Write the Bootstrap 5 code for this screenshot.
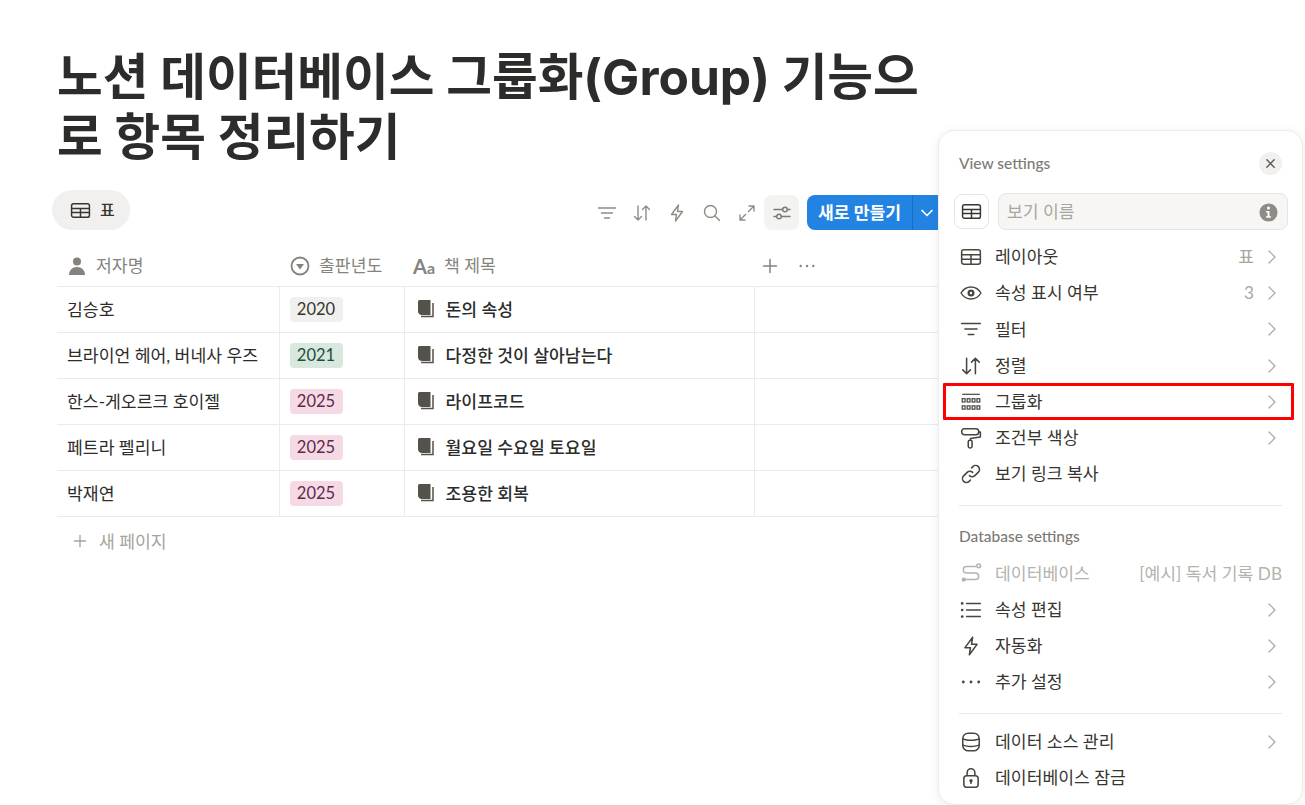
<!DOCTYPE html>
<html lang="ko">
<head>
<meta charset="UTF-8">
<meta name="viewport" content="width=device-width, initial-scale=1.0">
<title>노션 데이터베이스 그룹화</title>
<link rel="stylesheet" href="https://cdn.jsdelivr.net/npm/bootstrap@5.3.0/dist/css/bootstrap.min.css">
<style>
html, body { height: 100%; overflow: hidden; background: #fff; }
body { font-family: Lato, "Noto Sans CJK KR", sans-serif; color: #2c2c2b; position: relative; }
svg { display: block; flex: none; }
.page-main { width: 939px; height: 805px; padding: 45px 0 0 52px; overflow: hidden; }
.page-title { font-family: Inter, "Noto Sans CJK KR", sans-serif; font-size: 49.7px; line-height: 60px; font-weight: 700; margin: 2px 0 23px 5px; width: 868px; color: #2c2c2b; }
.view-bar { height: 40px; }
.tab-pill { flex: none; width: 78px; height: 40px; border-radius: 20px; background: #f1f0ee; font-size: 16px; font-weight: 500; gap: 9px; padding-left: 18px; color: #37352f; }
.tool-icons { padding-top: 5px; margin-right: -1px; }
.tool-btn { width: 35px; height: 35px; color: #8f8c86; }
.tool-btn.active { background: #f3f3f2; border-radius: 8px; color: #7d7a75; }
.new-btn { margin-left: 8px; width: 133px; height: 35px; border-radius: 8px 0 0 8px; background: #2383e2; color: #fff; font-size: 17.2px; font-weight: 700; flex: none; }
.new-btn .new-label { width: 106px; text-align: center; border-right: 1px solid #1a6cbd; line-height: 35px; }
.new-btn .new-arrow { width: 27px; }
.db-table { margin: 15px 0 0 5px; width: 881px; table-layout: fixed; border-collapse: collapse; }
.db-table th, .db-table td { padding: 0; border-bottom: 1px solid #ebebe9; }
.db-table th { height: 41px; padding-top: 1px; font-size: 17.2px; font-weight: 400; color: #86837e; }
.db-table td { height: 46px; font-size: 17.2px; border-right: 1px solid #ebebe9; color: #2c2c2b; }
.db-table td:last-child { border-right: 0; }
.head-cell { gap: 9px; padding-left: 11px; }
.head-first { padding-left: 10px; }
.head-title { padding-left: 9px; }
.head-tools { padding-left: 8px; }
.aa-mark { width: 22px; font-size: 20px; font-weight: 700; line-height: 1; }
.aa-mark small { font-size: 16px; }
.db-table td.name-cell { padding: 2px 0 0 10px; }
.year-tag { display: inline-block; margin-left: 10px; width: 53px; height: 25px; line-height: 25px; border-radius: 4px; text-align: center; font-size: 16.5px; }
.tag-gray { background: #f1f0ee; color: #37352f; }
.tag-green { background: #d9e8df; color: #1f4d3a; }
.tag-pink { background: #f5dae6; color: #5c2a48; }
.book-title { gap: 11px; padding: 2px 0 0 12px; font-weight: 500; font-size: 17.2px; color: #2c2c2b; }
.add-row { margin: 12px 0 0 21px; gap: 12px; font-size: 17.2px; color: #a6a39e; }
.settings-panel { position: absolute; left: 938px; top: 130px; width: 365px; height: 675px; background: #fff; border: 1px solid #ececea; border-radius: 16px; box-shadow: 0 2px 12px rgba(0, 0, 0, .07); }
.panel-head { padding: 21px 20px 0 20px; height: 44px; font-size: 15.5px; color: #7d7a75; font-weight: 500; }
.close-dot { width: 23px; height: 23px; border-radius: 50%; background: #f1f0ee; color: #5a5853; }
.name-row { padding: 19px 14px 0 15px; gap: 9px; }
.icon-box { width: 35px; height: 35px; border: 1px solid #e6e5e2; border-radius: 8px; color: #37352f; }
.name-field { width: 290px; height: 37px; margin-top: -1px; background: #f7f6f4; border: 1px solid #e6e5e2; border-radius: 8px; padding: 1px 9px 0 8px; font-size: 17.2px; color: #a8a6a1; }
.menu-list { margin-top: 9px; }
.menu-row { height: 36.2px; padding: 0 25px 0 22px; font-size: 17.2px; color: #37352f; }
.menu-row .row-icon { width: 24px; margin-right: 10px; color: #48463f; }
.menu-row .row-icon svg { width: 22px; height: 22px; margin-left: -1px; }
.menu-row .row-value { margin-left: auto; color: #a8a6a1; margin-right: 13px; }
.menu-row .row-chevron { color: #a8a6a1; }
.menu-row.dim { color: #b5b3ae; padding-right: 20px; }
.menu-row.dim .row-icon { color: #b5b3ae; }
.menu-row.dim .row-value { margin-right: 0; color: #b5b3ae; }
.row-push { margin-left: auto; }
.row-marked { position: relative; z-index: 1; }
.row-marked::after { content: ""; position: absolute; left: 4px; right: 8px; top: -1px; bottom: 0; border: 3px solid #f00; border-radius: 1px; }
.panel-rule { height: 1px; background: #e9e8e6; margin: 13px 20px 0 20px; }
.section-label { font-size: 15.5px; font-weight: 500; color: #7d7a75; padding: 19px 20px 0 20px; height: 49px; }
.rule-tail { margin-bottom: 10px; }
</style>
</head>
<body>
<svg width="0" height="0" class="position-absolute">
  <defs>
    <symbol id="i-table" viewBox="0 0 20 20"><g fill="none" stroke="currentColor" stroke-width="1.400"><rect x="1.500" y="3.500" width="17" height="13" rx="2"/><path d="M1.500 8h17M1.500 12h17M10 8v8.500"/></g></symbol>
    <symbol id="i-filter" viewBox="0 0 20 20"><path d="M1.500 5h17M4.500 10h11M7.500 15h5" fill="none" stroke="currentColor" stroke-width="1.400" stroke-linecap="round"/></symbol>
    <symbol id="i-sort" viewBox="0 0 20 20"><path d="M6 3v14M2.500 13.500 6 17l3.500-3.500M14 17V3M10.500 6.500 14 3l3.500 3.500" fill="none" stroke="currentColor" stroke-width="1.400" stroke-linecap="round" stroke-linejoin="round"/></symbol>
    <symbol id="i-bolt" viewBox="0 0 20 20"><path d="M11.500 2 4.500 11.500h5L8.500 18l7-9.500h-5z" fill="none" stroke="currentColor" stroke-width="1.400" stroke-linejoin="round"/></symbol>
    <symbol id="i-search" viewBox="0 0 20 20"><g fill="none" stroke="currentColor" stroke-width="1.400" stroke-linecap="round"><circle cx="8.500" cy="8.500" r="6"/><path d="m13 13 4.500 4.500"/></g></symbol>
    <symbol id="i-expand" viewBox="0 0 20 20"><path d="M11.500 8.500 17 3M12 3h5v5M8.500 11.500 3 17M3 12v5h5" fill="none" stroke="currentColor" stroke-width="1.400" stroke-linecap="round" stroke-linejoin="round"/></symbol>
    <symbol id="i-sliders" viewBox="0 0 20 20"><g fill="none" stroke="currentColor" stroke-width="1.400" stroke-linecap="round"><path d="M2 6.500h8.500M15.500 6.500H18M2 13.500h2.500M9.500 13.500H18"/><circle cx="13" cy="6.500" r="2.300"/><circle cx="7" cy="13.500" r="2.300"/></g></symbol>
    <symbol id="i-chev-down" viewBox="0 0 14 14"><path d="M2 4.500 7 9.500l5-5" fill="none" stroke="currentColor" stroke-width="1.700" stroke-linecap="round" stroke-linejoin="round"/></symbol>
    <symbol id="i-chev" viewBox="0 0 10 14"><path d="m2 1 6 6-6 6" fill="none" stroke="currentColor" stroke-width="1.200" stroke-linecap="round" stroke-linejoin="round"/></symbol>
    <symbol id="i-person" viewBox="0 0 20 20"><circle cx="10" cy="5.500" r="4" fill="currentColor"/><path d="M2 19c0-5 3.500-8 8-8s8 3 8 8z" fill="currentColor"/></symbol>
    <symbol id="i-select" viewBox="0 0 20 20"><circle cx="10" cy="10" r="8.500" fill="none" stroke="currentColor" stroke-width="1.800"/><path d="M6 8h8l-4 5.500z" fill="currentColor"/></symbol>
    <symbol id="i-book" viewBox="0 0 18 19"><path d="M1 1.500A1.500 1.500 0 0 1 2.500 0H13.500V15H5C2.800 15 1 13.500 1 11z" fill="#55524c"/><path d="M16 3v13.500H4" fill="none" stroke="#55524c" stroke-width="1.500"/></symbol>
    <symbol id="i-plus" viewBox="0 0 16 16"><path d="M8 1.500v13M1.500 8h13" stroke="currentColor" stroke-width="1.500" stroke-linecap="round"/></symbol>
    <symbol id="i-dots" viewBox="0 0 20 20"><g fill="currentColor"><circle cx="3" cy="10" r="1.300"/><circle cx="10" cy="10" r="1.300"/><circle cx="17" cy="10" r="1.300"/></g></symbol>
    <symbol id="i-eye" viewBox="0 0 22 20"><path fill="none" stroke="currentColor" stroke-width="1.400" d="M1 10C3.500 6 6.800 4 11 4s7.500 2 10 6c-2.500 4-5.800 6-10 6S3.500 14 1 10z"/><circle cx="11" cy="10" r="3.500" fill="currentColor"/><circle cx="11" cy="10" r="1.200" fill="#fff"/></symbol>
    <symbol id="i-group" viewBox="0 0 20 20"><g fill="none" stroke="currentColor" stroke-width="1.100"><path d="M2 3h16"/><rect x="2" y="7" width="2.600" height="3"/><rect x="6.500" y="7" width="2.600" height="3"/><rect x="11" y="7" width="2.600" height="3"/><rect x="15.400" y="7" width="2.600" height="3"/><rect x="2" y="13.500" width="2.600" height="3"/><rect x="6.500" y="13.500" width="2.600" height="3"/><rect x="11" y="13.500" width="2.600" height="3"/><rect x="15.400" y="13.500" width="2.600" height="3"/></g></symbol>
    <symbol id="i-roller" viewBox="0 0 20 20"><g fill="none" stroke="currentColor" stroke-width="1.400" stroke-linejoin="round"><rect x="1.500" y="1.500" width="15.500" height="5.500" rx="2.500"/><path d="M17 4.500h1.500v4.500l-9 1.500V12"/><rect x="7.500" y="12" width="3.500" height="7" rx="1.500"/></g></symbol>
    <symbol id="i-link" viewBox="0 0 20 20"><path d="M8.500 11.500a3.500 3.500 0 0 0 5 0l3.200-3.200a3.500 3.500 0 0 0-5-5L10.500 4.500M11.500 8.500a3.500 3.500 0 0 0-5 0l-3.200 3.200a3.500 3.500 0 0 0 5 5l1.200-1.200" fill="none" stroke="currentColor" stroke-width="1.400" stroke-linecap="round"/></symbol>
    <symbol id="i-source" viewBox="0 0 20 20"><g fill="none" stroke="currentColor" stroke-width="1.400" stroke-linecap="round"><path d="M14 4H6a3 3 0 0 0 0 6h8a3 3 0 0 1 0 6H6"/><circle cx="17" cy="3.500" r="1.700"/></g><circle cx="3.500" cy="16" r="2" fill="currentColor"/></symbol>
    <symbol id="i-list" viewBox="0 0 20 20"><g stroke="currentColor" stroke-width="1.400" stroke-linecap="round"><path d="M6 4h12.500M6 10h12.500M6 16h12.500"/></g><g fill="currentColor"><circle cx="2" cy="4" r="1.200"/><circle cx="2" cy="10" r="1.200"/><circle cx="2" cy="16" r="1.200"/></g></symbol>
    <symbol id="i-db" viewBox="0 0 20 20"><g fill="none" stroke="currentColor" stroke-width="1.400"><rect x="2.500" y="2" width="15" height="16" rx="5"/><path d="M2.500 7c2.500 2 12.500 2 15 0M2.500 12.500c2.500 2 12.500 2 15 0"/></g></symbol>
    <symbol id="i-lock" viewBox="0 0 20 20"><g fill="none" stroke="currentColor" stroke-width="1.400"><rect x="3.500" y="8" width="13" height="10.500" rx="2.500"/><path d="M6.500 8V5a3.500 3.500 0 0 1 7 0v3"/></g><circle cx="10" cy="12.500" r="1.500" fill="currentColor"/><path d="M10 13v2.500" stroke="currentColor" stroke-width="1.300"/></symbol>
    <symbol id="i-x" viewBox="0 0 12 12"><path d="m2 2 8 8M10 2l-8 8" stroke="currentColor" stroke-width="1.500" stroke-linecap="round"/></symbol>
    <symbol id="i-info" viewBox="0 0 20 20"><circle cx="10" cy="10" r="9.500" fill="#8f8c86"/><circle cx="10" cy="5.300" r="1.600" fill="#fff"/><path d="M7.500 8.500H11V14h1.500v1.500h-5V14H9V10H7.500z" fill="#fff"/></symbol>
  </defs>
</svg>

<div class="page-main">
  <h1 class="page-title">노션 데이터베이스 그룹화(Group) 기능으로 항목 정리하기</h1>

  <div class="view-bar d-flex">
    <div class="tab-pill d-flex align-items-center">
      <svg width="21" height="21"><use href="#i-table"/></svg><span>표</span>
    </div>
    <div class="tool-icons d-flex align-items-start justify-content-end ms-auto">
      <div class="tool-btn d-flex align-items-center justify-content-center"><svg width="20" height="20"><use href="#i-filter"/></svg></div>
      <div class="tool-btn d-flex align-items-center justify-content-center"><svg width="20" height="20"><use href="#i-sort"/></svg></div>
      <div class="tool-btn d-flex align-items-center justify-content-center"><svg width="20" height="20"><use href="#i-bolt"/></svg></div>
      <div class="tool-btn d-flex align-items-center justify-content-center"><svg width="20" height="20"><use href="#i-search"/></svg></div>
      <div class="tool-btn d-flex align-items-center justify-content-center"><svg width="20" height="20"><use href="#i-expand"/></svg></div>
      <div class="tool-btn active d-flex align-items-center justify-content-center"><svg width="20" height="20"><use href="#i-sliders"/></svg></div>
      <div class="new-btn d-flex align-items-center">
        <span class="new-label">새로 만들기</span>
        <span class="new-arrow d-flex justify-content-center"><svg width="14" height="14"><use href="#i-chev-down"/></svg></span>
      </div>
    </div>
  </div>

  <table class="db-table">
    <colgroup><col style="width:222px"><col style="width:125px"><col style="width:350px"><col></colgroup>
    <thead>
      <tr>
        <th><div class="head-cell head-first d-flex align-items-center"><svg width="20" height="20"><use href="#i-person"/></svg>저자명</div></th>
        <th><div class="head-cell d-flex align-items-center"><svg width="20" height="20"><use href="#i-select"/></svg>출판년도</div></th>
        <th><div class="head-cell head-title d-flex align-items-center"><span class="aa-mark">A<small>a</small></span>책 제목</div></th>
        <th><div class="head-tools d-flex align-items-center"><svg class="me-3" width="16" height="16"><use href="#i-plus"/></svg><svg class="ms-1" width="18" height="18"><use href="#i-dots"/></svg></div></th>
      </tr>
    </thead>
    <tbody>
      <tr><td class="name-cell">김승호</td><td><span class="year-tag tag-gray">2020</span></td><td><div class="book-title d-flex align-items-center"><svg width="18" height="19"><use href="#i-book"/></svg>돈의 속성</div></td><td></td></tr>
      <tr><td class="name-cell">브라이언 헤어, 버네사 우즈</td><td><span class="year-tag tag-green">2021</span></td><td><div class="book-title d-flex align-items-center"><svg width="18" height="19"><use href="#i-book"/></svg>다정한 것이 살아남는다</div></td><td></td></tr>
      <tr><td class="name-cell">한스-게오르크 호이젤</td><td><span class="year-tag tag-pink">2025</span></td><td><div class="book-title d-flex align-items-center"><svg width="18" height="19"><use href="#i-book"/></svg>라이프코드</div></td><td></td></tr>
      <tr><td class="name-cell">페트라 펠리니</td><td><span class="year-tag tag-pink">2025</span></td><td><div class="book-title d-flex align-items-center"><svg width="18" height="19"><use href="#i-book"/></svg>월요일 수요일 토요일</div></td><td></td></tr>
      <tr><td class="name-cell">박재연</td><td><span class="year-tag tag-pink">2025</span></td><td><div class="book-title d-flex align-items-center"><svg width="18" height="19"><use href="#i-book"/></svg>조용한 회복</div></td><td></td></tr>
    </tbody>
  </table>

  <div class="add-row d-flex align-items-center"><svg width="14" height="14"><use href="#i-plus"/></svg>새 페이지</div>
</div>

<aside class="settings-panel">
  <div class="panel-head d-flex justify-content-between align-items-start">
    <span>View settings</span>
    <span class="close-dot d-flex align-items-center justify-content-center"><svg width="11" height="11"><use href="#i-x"/></svg></span>
  </div>
  <div class="name-row d-flex align-items-start">
    <div class="icon-box d-flex align-items-center justify-content-center"><svg width="21" height="21"><use href="#i-table"/></svg></div>
    <div class="name-field d-flex align-items-center justify-content-between"><span>보기 이름</span><svg width="19" height="19"><use href="#i-info"/></svg></div>
  </div>

  <div class="menu-list">
    <div class="menu-row d-flex align-items-center"><span class="row-icon"><svg><use href="#i-table"/></svg></span>레이아웃<span class="row-value">표</span><svg class="row-chevron" width="10" height="14"><use href="#i-chev"/></svg></div>
    <div class="menu-row d-flex align-items-center"><span class="row-icon"><svg><use href="#i-eye"/></svg></span>속성 표시 여부<span class="row-value">3</span><svg class="row-chevron" width="10" height="14"><use href="#i-chev"/></svg></div>
    <div class="menu-row d-flex align-items-center"><span class="row-icon"><svg><use href="#i-filter"/></svg></span>필터<svg class="row-chevron row-push" width="10" height="14"><use href="#i-chev"/></svg></div>
    <div class="menu-row d-flex align-items-center"><span class="row-icon"><svg><use href="#i-sort"/></svg></span>정렬<svg class="row-chevron row-push" width="10" height="14"><use href="#i-chev"/></svg></div>
    <div class="menu-row row-marked d-flex align-items-center"><span class="row-icon"><svg><use href="#i-group"/></svg></span>그룹화<svg class="row-chevron row-push" width="10" height="14"><use href="#i-chev"/></svg></div>
    <div class="menu-row d-flex align-items-center"><span class="row-icon"><svg><use href="#i-roller"/></svg></span>조건부 색상<svg class="row-chevron row-push" width="10" height="14"><use href="#i-chev"/></svg></div>
    <div class="menu-row d-flex align-items-center"><span class="row-icon"><svg><use href="#i-link"/></svg></span>보기 링크 복사</div>
  </div>

  <div class="panel-rule"></div>
  <div class="section-label">Database settings</div>

  <div>
    <div class="menu-row dim d-flex align-items-center"><span class="row-icon"><svg><use href="#i-source"/></svg></span>데이터베이스<span class="row-value">[예시] 독서 기록 DB</span></div>
    <div class="menu-row d-flex align-items-center"><span class="row-icon"><svg><use href="#i-list"/></svg></span>속성 편집<svg class="row-chevron row-push" width="10" height="14"><use href="#i-chev"/></svg></div>
    <div class="menu-row d-flex align-items-center"><span class="row-icon"><svg><use href="#i-bolt"/></svg></span>자동화<svg class="row-chevron row-push" width="10" height="14"><use href="#i-chev"/></svg></div>
    <div class="menu-row d-flex align-items-center"><span class="row-icon"><svg><use href="#i-dots"/></svg></span>추가 설정<svg class="row-chevron row-push" width="10" height="14"><use href="#i-chev"/></svg></div>
  </div>

  <div class="panel-rule rule-tail"></div>

  <div>
    <div class="menu-row d-flex align-items-center"><span class="row-icon"><svg><use href="#i-db"/></svg></span>데이터 소스 관리<svg class="row-chevron row-push" width="10" height="14"><use href="#i-chev"/></svg></div>
    <div class="menu-row d-flex align-items-center"><span class="row-icon"><svg><use href="#i-lock"/></svg></span>데이터베이스 잠금</div>
  </div>
</aside>

<script src="https://cdn.jsdelivr.net/npm/bootstrap@5.3.0/dist/js/bootstrap.bundle.min.js"></script>
</body>
</html>
